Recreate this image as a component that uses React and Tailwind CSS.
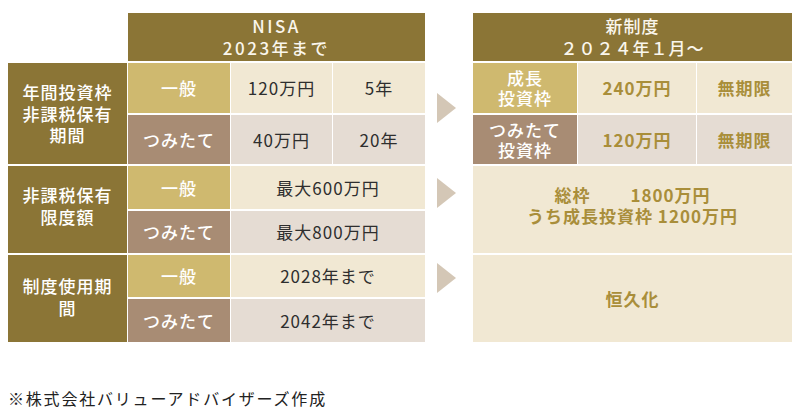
import React from "react";

const font = { fontFamily: '"Noto Sans CJK JP", "Noto Sans", sans-serif' };

function Arrow({ className }) {
  return (
    <svg width="19" height="30" viewBox="0 0 19 30" className={className}>
      <polygon points="0,0 19,15 0,30" fill="#d4c7b6" />
    </svg>
  );
}

const rows = "grid-rows-[48px_50px_49px_43px_42px_42px_43px]";

export default function App() {
  return (
    <div className="w-[800px] h-[415px] bg-white pl-[8px] pt-[13px]" style={font}>
      <div className="flex">
        {/* Left table */}
        <div className={`grid grid-cols-[119px_102px_101px_92px] ${rows} gap-x-px gap-y-[2px] text-[17px] tracking-[1px]`}>
          <div className="col-start-2 col-span-3 bg-[#8b7536] text-[#faf6ec] flex flex-col items-center justify-center leading-[22px] tracking-[2.5px] font-medium">
            <span>NISA</span>
            <span>2023年まで</span>
          </div>

          <div className="col-start-1 row-start-2 row-span-2 bg-[#8b7536] text-white font-medium flex flex-col items-center justify-center leading-[21.5px] text-center">
            <span>年間投資枠</span>
            <span>非課税保有</span>
            <span>期間</span>
          </div>
          <div className="bg-[#cfb96f] text-white font-medium flex items-center justify-center">一般</div>
          <div className="bg-[#f1e8d3] text-[#2e2e2e] flex items-center justify-center">120万円</div>
          <div className="bg-[#f1e8d3] text-[#2e2e2e] flex items-center justify-center">5年</div>
          <div className="bg-[#a88c74] text-white font-medium flex items-center justify-center">つみたて</div>
          <div className="bg-[#e5dcd3] text-[#2e2e2e] flex items-center justify-center">40万円</div>
          <div className="bg-[#e5dcd3] text-[#2e2e2e] flex items-center justify-center">20年</div>

          <div className="col-start-1 row-span-2 bg-[#8b7536] text-white font-medium flex flex-col items-center justify-center leading-[21.5px] pb-[8px]">
            <span>非課税保有</span>
            <span>限度額</span>
          </div>
          <div className="bg-[#cfb96f] text-white font-medium flex items-center justify-center">一般</div>
          <div className="col-span-2 bg-[#f1e8d3] text-[#2e2e2e] flex items-center justify-center">最大600万円</div>
          <div className="bg-[#a88c74] text-white font-medium flex items-center justify-center">つみたて</div>
          <div className="col-span-2 bg-[#e5dcd3] text-[#2e2e2e] flex items-center justify-center">最大800万円</div>

          <div className="col-start-1 row-span-2 bg-[#8b7536] text-white font-medium flex flex-col items-center justify-center leading-[21.5px] pb-[4px]">
            <span>制度使用期</span>
            <span>間</span>
          </div>
          <div className="bg-[#cfb96f] text-white font-medium flex items-center justify-center">一般</div>
          <div className="col-span-2 bg-[#f1e8d3] text-[#2e2e2e] flex items-center justify-center">2028年まで</div>
          <div className="bg-[#a88c74] text-white font-medium flex items-center justify-center">つみたて</div>
          <div className="col-span-2 bg-[#e5dcd3] text-[#2e2e2e] flex items-center justify-center">2042年まで</div>
        </div>

        {/* Arrows */}
        <div className={`grid ${rows} gap-y-[2px] w-[48px] pl-[12px]`}>
          <div className="row-start-2 row-span-2 pt-[30px]"><Arrow /></div>
          <div className="row-span-2 pt-[12px]"><Arrow /></div>
          <div className="row-span-2 pt-[8px]"><Arrow /></div>
        </div>

        {/* Right table */}
        <div className={`grid grid-cols-[104px_118px_95px] ${rows} gap-x-px gap-y-[2px] text-[17px] tracking-[1px]`}>
          <div className="col-span-3 bg-[#8b7536] text-[#faf6ec] flex flex-col items-center justify-center leading-[22px] font-medium">
            <span>新制度</span>
            <span>２０２４年１月～</span>
          </div>
          <div className="bg-[#cfb96f] text-white font-medium flex flex-col items-center justify-center leading-[20px]">
            <span>成長</span>
            <span>投資枠</span>
          </div>
          <div className="bg-[#f1e8d3] text-[#a98e3a] font-bold flex items-center justify-center">240万円</div>
          <div className="bg-[#f1e8d3] text-[#a98e3a] font-bold flex items-center justify-center">無期限</div>
          <div className="bg-[#a88c74] text-white font-medium flex flex-col items-center justify-center leading-[20px]">
            <span>つみたて</span>
            <span>投資枠</span>
          </div>
          <div className="bg-[#e5dcd3] text-[#a98e3a] font-bold flex items-center justify-center">120万円</div>
          <div className="bg-[#e5dcd3] text-[#a98e3a] font-bold flex items-center justify-center">無期限</div>

          <div className="col-span-3 row-span-2 bg-[#f1e8d3] text-[#a98e3a] font-bold flex flex-col items-center justify-center leading-[21px] pb-[10px]">
            <span className="flex gap-[40px]"><span>総枠</span><span>1800万円</span></span>
            <span>うち成長投資枠 1200万円</span>
          </div>
          <div className="col-span-3 row-span-2 bg-[#f1e8d3] text-[#a98e3a] font-bold flex items-center justify-center">恒久化</div>
        </div>
      </div>

      <p
        className="mt-[46px] text-[16px] leading-[24px] tracking-[1.8px] text-[#222]"
        style={{ fontFamily: '"Liberation Serif", "Noto Sans CJK JP", serif' }}
      >
        ※株式会社バリューアドバイザーズ作成
      </p>
    </div>
  );
}
